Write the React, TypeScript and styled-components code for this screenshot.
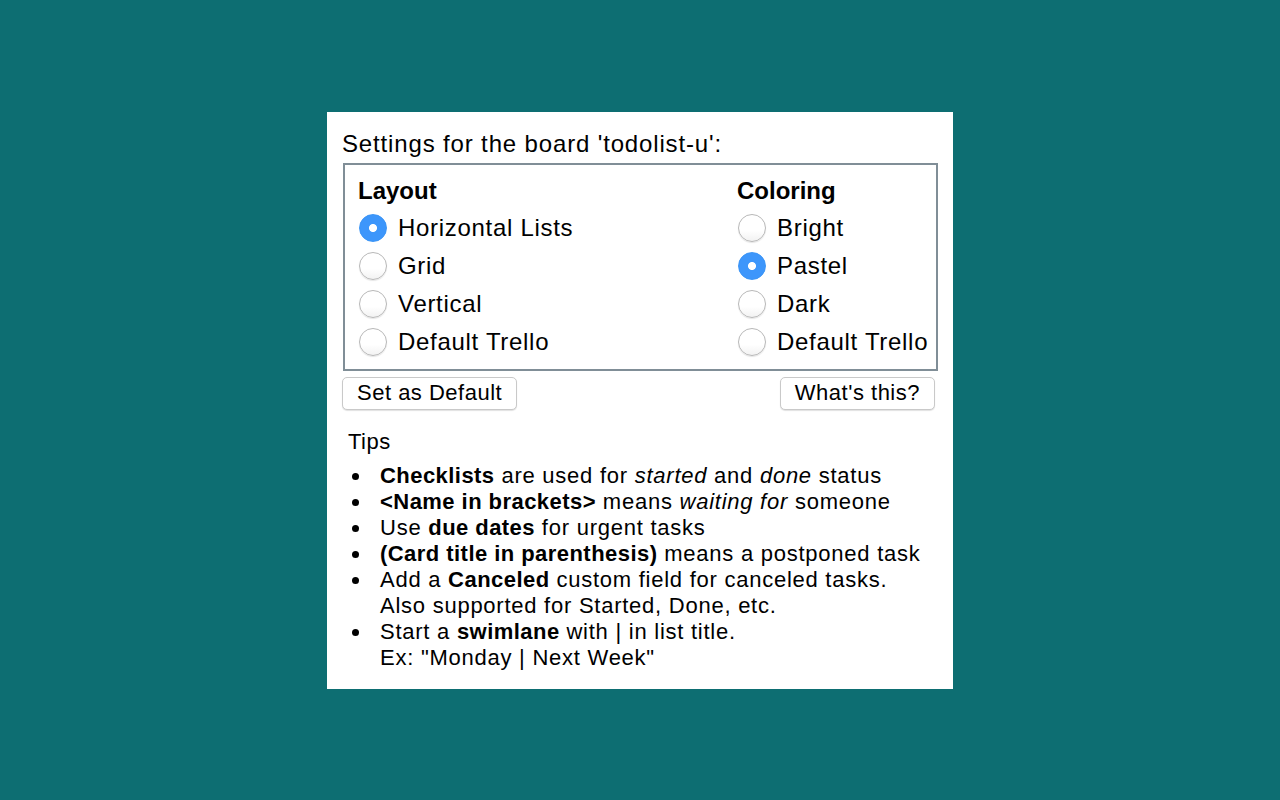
import styled, { createGlobalStyle } from "styled-components";

const GlobalStyle = createGlobalStyle`
  html, body {
    margin: 0;
    height: 100%;
  }
  body {
    background: #0d6e72;
    font-family: "Liberation Sans", Arial, sans-serif;
    color: #000;
  }
  #root {
    height: 100%;
  }
`;

const Screen = styled.div`
  height: 100vh;
  display: flex;
  align-items: center;
  justify-content: center;
`;

const Panel = styled.div`
  width: 626px;
  box-sizing: border-box;
  background: #fff;
  padding: 18px 15px 18px 15px;
`;

const Heading = styled.div`
  font-size: 24px;
  line-height: 28px;
  letter-spacing: 0.85px;
  margin-bottom: 5px;
`;

const OptionsBox = styled.div`
  border: 2px solid #808e97;
  margin-left: 1px;
  padding: 12px 0 8px 13px;
  display: grid;
  grid-template-columns: 379px 1fr;
`;

const Column = styled.div`
  display: flex;
  flex-direction: column;
  white-space: nowrap;
`;

const ColumnTitle = styled.div`
  font-size: 24px;
  font-weight: 700;
  line-height: 28px;
  margin-bottom: 4px;
`;

const RadioRow = styled.label`
  height: 38px;
  display: flex;
  align-items: center;
  gap: 11px;
  font-size: 24px;
  letter-spacing: 0.7px;
`;

const RadioInput = styled.input.attrs({ type: "radio" })`
  appearance: none;
  flex: none;
  margin: 0 0 0 1px;
  width: 28px;
  height: 28px;
  border-radius: 50%;
  box-sizing: border-box;
  border: 1px solid #b8b8b8;
  background: linear-gradient(#ffffff 60%, #f2f2f2);
  box-shadow: 0 1px 1px rgba(0, 0, 0, 0.1);

  &:checked {
    border-color: #3a94f6;
    background: radial-gradient(circle, #ffffff 0 3.6px, #3d96fb 4.4px);
    box-shadow: none;
  }
`;

const ButtonRow = styled.div`
  display: flex;
  justify-content: space-between;
  margin-top: 6px;
  padding-right: 3px;
`;

const Button = styled.button`
  height: 33px;
  padding: 0 14px;
  background: #fff;
  border: 1px solid #c9c9c9;
  border-radius: 5px;
  box-shadow: 0 1px 1px rgba(0, 0, 0, 0.12);
  font-family: "Liberation Sans", Arial, sans-serif;
  font-size: 22px;
  letter-spacing: 0.5px;
  color: #000;
`;

const TipsTitle = styled.div`
  margin: 19px 0 8px 6px;
  font-size: 22px;
  line-height: 26px;
  letter-spacing: 0.5px;
`;

const TipList = styled.ul`
  list-style: none;
  margin: 0;
  padding: 0;
`;

const Tip = styled.li`
  display: grid;
  grid-template-columns: 38px 1fr;
  font-size: 22px;
  line-height: 26px;
  letter-spacing: 0.75px;

  &::before {
    content: "";
    width: 7px;
    height: 7px;
    border-radius: 50%;
    background: #000;
    margin: 10px 0 0 10px;
  }

  b {
    letter-spacing: 0.45px;
  }
`;

const layoutOptions = ["Horizontal Lists", "Grid", "Vertical", "Default Trello"];
const coloringOptions = ["Bright", "Pastel", "Dark", "Default Trello"];

const RadioGroup = ({
  title,
  name,
  options,
  selected,
}: {
  title: string;
  name: string;
  options: string[];
  selected: string;
}) => (
  <Column>
    <ColumnTitle>{title}</ColumnTitle>
    {options.map((opt) => (
      <RadioRow key={opt}>
        <RadioInput name={name} defaultChecked={opt === selected} />
        {opt}
      </RadioRow>
    ))}
  </Column>
);

export default function App() {
  return (
    <Screen>
      <GlobalStyle />
      <Panel>
        <Heading>Settings for the board 'todolist-u':</Heading>
        <OptionsBox>
          <RadioGroup
            title="Layout"
            name="layout"
            options={layoutOptions}
            selected="Horizontal Lists"
          />
          <RadioGroup
            title="Coloring"
            name="coloring"
            options={coloringOptions}
            selected="Pastel"
          />
        </OptionsBox>
        <ButtonRow>
          <Button>Set as Default</Button>
          <Button>What's this?</Button>
        </ButtonRow>
        <TipsTitle>Tips</TipsTitle>
        <TipList>
          <Tip>
            <span>
              <b>Checklists</b> are used for <i>started</i> and <i>done</i> status
            </span>
          </Tip>
          <Tip>
            <span>
              <b>&lt;Name in brackets&gt;</b> means <i>waiting for</i> someone
            </span>
          </Tip>
          <Tip>
            <span>
              Use <b>due dates</b> for urgent tasks
            </span>
          </Tip>
          <Tip>
            <span>
              <b>(Card title in parenthesis)</b> means a postponed task
            </span>
          </Tip>
          <Tip>
            <span>
              Add a <b>Canceled</b> custom field for canceled tasks.
              <br />
              Also supported for Started, Done, etc.
            </span>
          </Tip>
          <Tip>
            <span>
              Start a <b>swimlane</b> with | in list title.
              <br />
              Ex: "Monday | Next Week"
            </span>
          </Tip>
        </TipList>
      </Panel>
    </Screen>
  );
}
